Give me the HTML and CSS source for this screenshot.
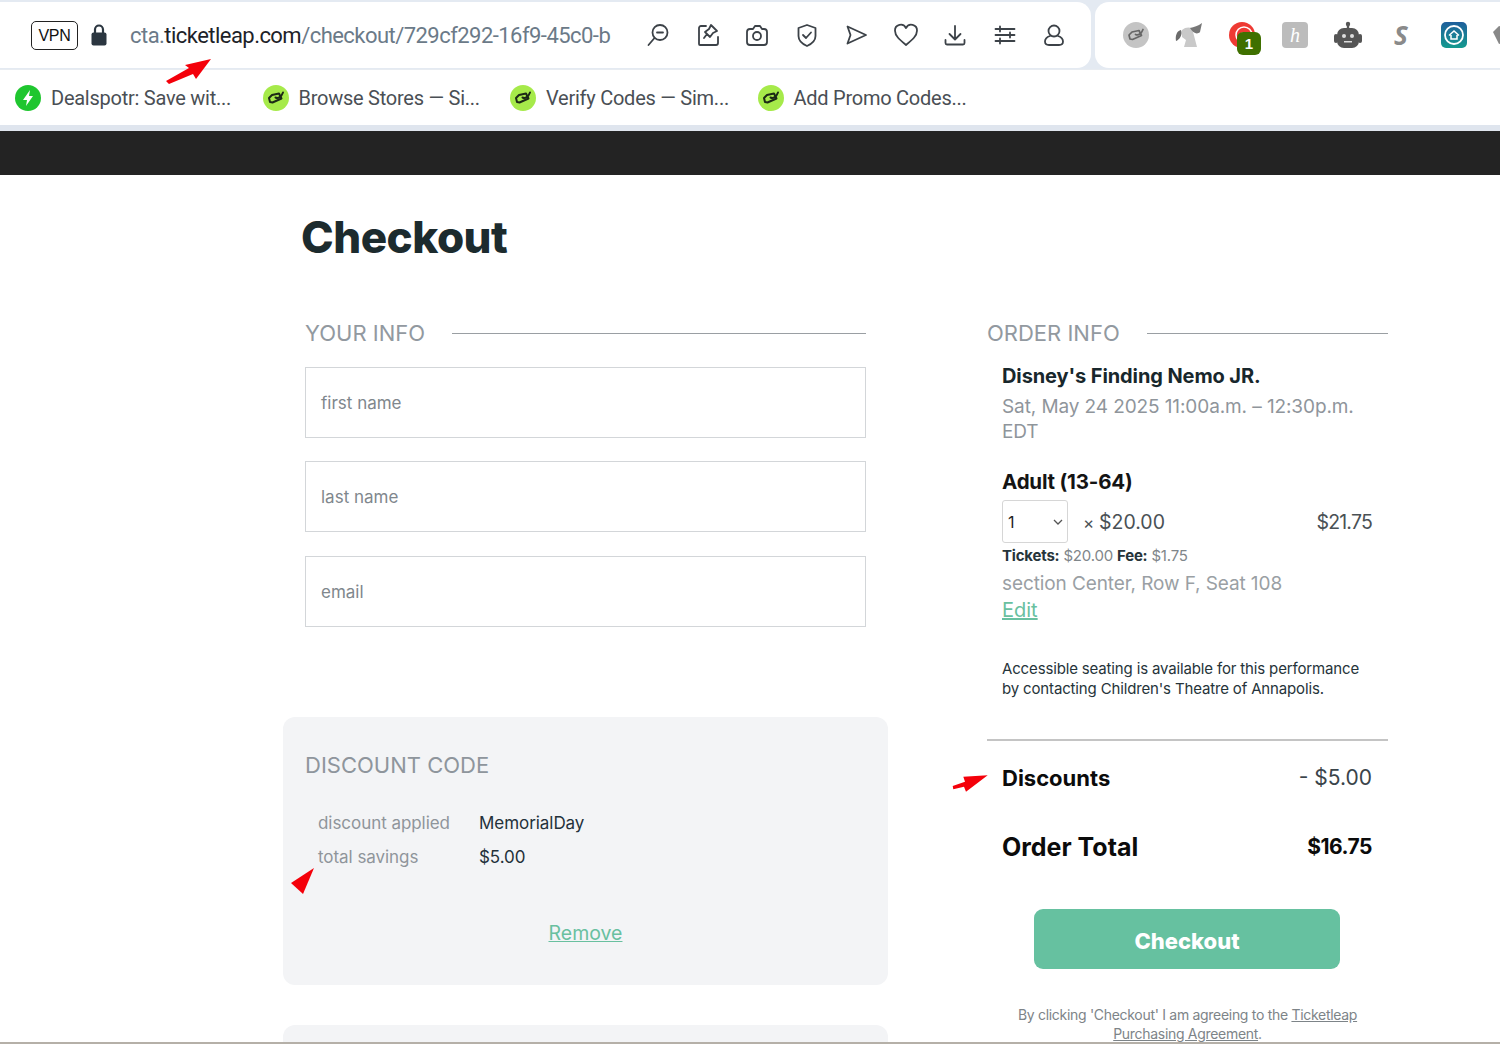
FILE: index.html
```html
<!DOCTYPE html>
<html lang="en">
<head>
<meta charset="utf-8">
<title>Checkout</title>
<link rel="stylesheet" href="styles.css">
</head>
<body>
<div class="window">
  <header class="toolbar">
    <div class="panel panel-main">
      <span class="vpn">VPN</span>
      <svg class="lock" viewBox="0 0 18 24" width="18" height="24"><path d="M5 10V6.500a4 4 0 0 1 8 0V10" fill="none" stroke="#2b3640" stroke-width="2.200"/><rect x="1.500" y="9.500" width="15" height="13" rx="2" fill="#2b3640"/></svg>
      <div class="url"><span>cta.</span><b>ticketleap.com</b><span>/checkout/729cf292-16f9-45c0-b</span></div>
      <div class="tools">
        <svg class="tool" viewBox="0 0 26 26"><circle cx="15" cy="10.500" r="7.500"/><path d="M12 10.500h6M9.500 16 3.500 23"/></svg>
        <svg class="tool" viewBox="0 0 26 26"><path d="M11 4H6a2 2 0 0 0-2 2v16a1 1 0 0 0 1 1h16a2 2 0 0 0 2-2v-6"/><path d="M16 3l6 6-4 2-3 4-5-5 4-3zM12 12l-3 4"/></svg>
        <svg class="tool" viewBox="0 0 26 26"><path d="M3 10a3 3 0 0 1 3-3h3l2-3h5l2 3h2a3 3 0 0 1 3 3v10a3 3 0 0 1-3 3H6a3 3 0 0 1-3-3z"/><circle cx="13" cy="14" r="4"/></svg>
        <svg class="tool" viewBox="0 0 26 26"><path d="M13 3l8.500 3v8c0 5-4 8-8.500 10-4.500-2-8.500-5-8.500-10V6z"/><path d="M9 13l3 3 5-5.500"/></svg>
        <svg class="tool" viewBox="0 0 26 26"><path d="M4.500 4.500 23 13 4.500 21.500 7.500 13z"/></svg>
        <svg class="tool" viewBox="0 0 26 26"><path d="M13 23C7 18 2 14 2 8.800A5.800 5.800 0 0 1 13 6a5.800 5.800 0 0 1 11 2.800C24 14 19 18 13 23z"/></svg>
        <svg class="tool" viewBox="0 0 26 26"><path d="M13 4v13M7.500 12l5.500 5.500 5.500-5.500M3.500 18v3a1.500 1.500 0 0 0 1.500 1.500h16a1.500 1.500 0 0 0 1.500-1.500v-3"/></svg>
        <svg class="tool" viewBox="0 0 26 26"><path d="M3.500 7h19M3.500 13h19M3.500 19h19M8 4.500v5M18 10.500v5M8 16.500v5"/></svg>
        <svg class="tool" viewBox="0 0 26 26"><circle cx="13" cy="9" r="5.500"/><path d="M9 14c-3 1-5 3-5 5.500C4 22 6 23 8 23h10c2 0 4-1 4-3.500 0-2.500-2-4.500-5-5.500"/></svg>
      </div>
    </div>
    <div class="panel panel-ext">
      <span class="ext"><svg viewBox="0 0 26 26" width="26" height="26"><circle cx="13" cy="13" r="13" fill="#c4c4c4"/><path d="M6 13l3-3 7-1.500 2.500 5-9 4-2.500-.5z" fill="none" stroke="#666" stroke-width="1.700" stroke-linejoin="round"/><path d="M12.500 12.500c3 1.500 6-1 7.500-5" fill="none" stroke="#666" stroke-width="1.700" stroke-linecap="round"/></svg></span>
      <span class="ext"><svg viewBox="0 0 28 26" width="28" height="26"><path d="M7 8c3-3 7-3 10-2l5 19H9l2-7-4-3z" fill="#c9c9c9"/><path d="M15 6c4-1 8-2 12-5l-2 9c-3 3-7 1-10-4z" fill="#777"/><path d="M6 8C2 9 0 13 1 19c3-1 7-6 5-11z" fill="#6b6b6b"/></svg></span>
      <span class="ext"><svg viewBox="0 0 26 26" width="26" height="26"><circle cx="13" cy="13" r="13" fill="#ee3a33"/><circle cx="15" cy="13" r="8" fill="none" stroke="#fff" stroke-width="1.500"/><circle cx="15" cy="14" r="4" fill="#fff"/></svg><span class="badge">1</span></span>
      <span class="ext"><span class="honey">h</span></span>
      <span class="ext"><svg viewBox="0 0 28 28" width="28" height="28"><circle cx="14" cy="3" r="2.200" fill="#555"/><rect x="12.800" y="4" width="2.400" height="4" fill="#555"/><rect x="3" y="7" width="22" height="20" rx="7" fill="#555"/><rect x="0" y="13" width="4" height="9" rx="2" fill="#555"/><rect x="24" y="13" width="4" height="9" rx="2" fill="#555"/><circle cx="10" cy="15" r="2" fill="#ddd"/><circle cx="18" cy="15" r="2" fill="#ddd"/><path d="M10 20h8v1.500h-8z" fill="#ddd"/></svg></span>
      <span class="ext ext-s">S</span>
      <span class="ext"><svg viewBox="0 0 26 26" width="26" height="26"><defs><linearGradient id="blueTeal" x1="0" y1="0" x2="0" y2="1"><stop offset="0" stop-color="#1f5f9c"/><stop offset="1" stop-color="#149a8f"/></linearGradient></defs><rect width="26" height="26" rx="5" fill="url(#blueTeal)"/><circle cx="13" cy="13" r="9" fill="none" stroke="#fff" stroke-width="1.800"/><path d="M8 13.500l5-4.500 5 4.500M10 13v4h6v-4" fill="none" stroke="#fff" stroke-width="1.500"/></svg></span>
      <span class="ext ext-cut"><svg viewBox="0 0 12 26" width="12" height="26"><path d="M0 10l6-6 6 2v14l-6 2z" fill="#888"/></svg></span>
    </div>
  </header>
  <nav class="bookmarks">
    <a class="mark"><svg viewBox="0 0 26 26" width="26" height="26"><circle cx="13" cy="13" r="13" fill="#1fc62f"/><path d="M15 5l-7 10h4l-1 6 7-10h-4z" fill="#fff"/></svg>Dealspotr: Save wit...</a>
    <a class="mark"><svg viewBox="0 0 26 26" width="26" height="26"><circle cx="13" cy="13" r="13" fill="#a6ea4a"/><path d="M6 13l3-3 7-1.500 2.500 5-9 4-2.500-.5z" fill="none" stroke="#1c2a16" stroke-width="2" stroke-linejoin="round"/><path d="M12.500 12.500c3 1.500 6-1 7.500-5" fill="none" stroke="#1c2a16" stroke-width="2" stroke-linecap="round"/></svg>Browse Stores — Si...</a>
    <a class="mark"><svg viewBox="0 0 26 26" width="26" height="26"><circle cx="13" cy="13" r="13" fill="#a6ea4a"/><path d="M6 13l3-3 7-1.500 2.500 5-9 4-2.500-.5z" fill="none" stroke="#1c2a16" stroke-width="2" stroke-linejoin="round"/><path d="M12.500 12.500c3 1.500 6-1 7.500-5" fill="none" stroke="#1c2a16" stroke-width="2" stroke-linecap="round"/></svg>Verify Codes — Sim...</a>
    <a class="mark"><svg viewBox="0 0 26 26" width="26" height="26"><circle cx="13" cy="13" r="13" fill="#a6ea4a"/><path d="M6 13l3-3 7-1.500 2.500 5-9 4-2.500-.5z" fill="none" stroke="#1c2a16" stroke-width="2" stroke-linejoin="round"/><path d="M12.500 12.500c3 1.500 6-1 7.500-5" fill="none" stroke="#1c2a16" stroke-width="2" stroke-linecap="round"/></svg>Add Promo Codes...</a>
  </nav>
  <div class="strip"></div>
  <div class="darkbar"></div>

  <main class="page">
    <h1 class="title">Checkout</h1>
    <div class="columns">
      <section class="left">
        <div class="info-block">
          <h2 class="heading"><span>YOUR INFO</span></h2>
          <div class="field">first name</div>
          <div class="field">last name</div>
          <div class="field">email</div>
        </div>
        <div class="card discount">
          <h2 class="heading-plain">DISCOUNT CODE</h2>
          <dl class="applied">
            <dt>discount applied</dt><dd>MemorialDay</dd>
            <dt>total savings</dt><dd>$5.00</dd>
          </dl>
          <a class="link remove">Remove</a>
        </div>
        <div class="card next"></div>
      </section>
      <section class="right">
        <h2 class="heading"><span>ORDER INFO</span></h2>
        <div class="order">
          <h3 class="event">Disney's Finding Nemo JR.</h3>
          <p class="when">Sat, May 24 2025 11:00a.m. – 12:30p.m. EDT</p>
          <h3 class="ticket">Adult (13-64)</h3>
          <div class="qty-row">
            <span class="select">1<svg viewBox="0 0 10 6" width="10" height="6"><path d="M1 1l4 4 4-4" fill="none" stroke="#555" stroke-width="1.300"/></svg></span>
            <span class="times">× <span class="each">$20.00</span></span>
            <span class="line-total">$21.75</span>
          </div>
          <p class="fees"><b>Tickets:</b> $20.00 <b>Fee:</b> $1.75</p>
          <p class="seat">section Center, Row F, Seat 108</p>
          <a class="link edit">Edit</a>
          <p class="access">Accessible seating is available for this performance by contacting Children's Theatre of Annapolis.</p>
        </div>
        <div class="totals">
          <div class="row-discount"><b>Discounts</b><span>- $5.00</span></div>
          <div class="row-total"><b>Order Total</b><b class="sum">$16.75</b></div>
        </div>
        <button class="pay">Checkout</button>
        <p class="legal">By clicking 'Checkout' I am agreeing to the <u>Ticketleap</u> <u>Purchasing Agreement</u>.</p>
      </section>
    </div>
  </main>

  <svg class="arrow arrow-url" viewBox="0 0 48 28" width="48" height="28"><path d="M1 24 24 11l-4-3 26-6-15 20-3-5L4 27z" fill="#f4000a"/></svg>
  <svg class="arrow arrow-disc" viewBox="0 0 36 20" width="36" height="20"><path d="M35.700 2.300 11.300 3.700 13 8.700.7 13l.6 3.300L12 13.700l2 5z" fill="#f4000a"/></svg>
  <svg class="arrow arrow-save" viewBox="0 0 24 26" width="24" height="26"><path d="M23 0 12 26 0 15z" fill="#f4000a"/></svg>
  <div class="bottom-edge"></div>
</div>
</body>
</html>
```
FILE: styles.css
```css
* { box-sizing: border-box; }
html, body { margin: 0; padding: 0; height: 100%; overflow: hidden; background: #fff; }
body { font-family: "Inter", "Liberation Sans", sans-serif; color: #1f2a2e; }
.window { position: relative; width: 1500px; height: 1044px; overflow: hidden; display: flex; flex-direction: column; }

.toolbar { height: 69px; padding-top: 2px; background: #e4eaf2; display: flex; gap: 4px; flex: none; }
.panel { background: #fff; height: 66px; display: flex; align-items: center; }
.panel-main { width: 1091px; flex: none; border-radius: 0 14px 14px 0; padding-left: 31px; }
.panel-ext { flex: 1; border-radius: 14px 0 0 14px; padding-left: 27px; }
.vpn { width: 47px; height: 29px; flex: none; padding-top: 2px; border: 1.500px solid #222; border-radius: 5px; font: 16px "Liberation Sans", sans-serif; letter-spacing: -0.3px; display: flex; align-items: center; justify-content: center; color: #111; }
.lock { margin-left: 12px; flex: none; }
.url { margin-left: 22px; width: 500px; flex: none; font: 22px "Roboto", sans-serif; letter-spacing: -0.54px; color: #6b7a88; white-space: nowrap; }
.url b { font-weight: 400; color: #1d2228; }
.tools { display: flex; gap: 23.500px; margin-left: 15px; flex: none; }
.tool { width: 26px; height: 26px; fill: none; stroke: #3c4248; stroke-width: 1.800; stroke-linecap: round; stroke-linejoin: round; }

.ext { width: 28px; height: 28px; margin-right: 25px; display: flex; align-items: center; justify-content: center; position: relative; flex: none; }
.ext-cut { margin-right: 0; justify-content: flex-start; }
.badge { position: absolute; left: 9px; top: 11px; width: 24px; height: 23px; border-radius: 6px; background: #3f7000; color: #fff; font: bold 15px "Liberation Sans", sans-serif; display: flex; align-items: center; justify-content: center; }
.honey { width: 26px; height: 26px; background: #bcbcbc; border-radius: 4px; color: #fff; font: italic 20px "Liberation Serif", serif; display: flex; align-items: center; justify-content: center; }
.ext-s { font: italic bold 26px "Open Sans", sans-serif; color: #8a8a8a; }

.bookmarks { height: 56px; flex: none; display: grid; grid-template-columns: repeat(4, 247.500px); align-items: center; padding-left: 15px; background: #fff; border-top: 1px solid #e8ecf1; }
.mark { display: flex; align-items: center; gap: 10px; font: 20px "Roboto", sans-serif; letter-spacing: -0.25px; color: #4a4f55; white-space: nowrap; }
.strip { height: 6px; background: #dfe5ee; flex: none; }
.darkbar { height: 44px; background: #232323; flex: none; }

.page { flex: 1; padding: 38px 0 0 283px; }
.title { margin: 0 0 0 18px; font: 800 44px/48px "Inter", sans-serif; letter-spacing: -0.5px; color: #1c2b2e; }
.columns { display: flex; margin-top: 62px; gap: 99px; }
.left { width: 605px; flex: none; }
.right { width: 401px; flex: none; }

.info-block { padding: 0 22px; }
.heading { margin: 0; height: 20px; font: 400 22px/20px "Inter", sans-serif; color: #9299a0; display: flex; align-items: center; gap: 27px; }
.heading::after { content: ""; flex: 1; height: 1px; background: #9a9fa3; }
.field { height: 71px; margin-top: 23.500px; border: 1px solid #d3d6d9; padding: 1px 15px 0; display: flex; align-items: center; font-size: 17px; color: #80878d; }

.card { background: #f3f4f6; border-radius: 12px; }
.discount { margin-top: 90px; height: 268px; padding: 37px 22px 0; display: flex; flex-direction: column; }
.heading-plain { margin: 0; font: 400 22px/22px "Inter", sans-serif; color: #8e959c; }
.applied { margin: 35px 0 0 13px; display: grid; grid-template-columns: 161px 1fr; row-gap: 10px; font-size: 17px; line-height: 24px; letter-spacing: -0.05px; }
.applied dt { color: #8f959b; }
.applied dd { margin: 0; color: #23313a; }
.link { color: #69c0a0; text-decoration: underline; }
.remove { align-self: center; font-size: 19.500px; margin-top: 52px; }
.next { margin-top: 40px; height: 60px; }

.order { padding: 0 16px 0 15px; }
.event { margin: 20px 0 0; font: 700 20px/26px "Inter", sans-serif; letter-spacing: -0.1px; color: #18272c; }
.when { margin: 5px 0 0; font-size: 19px; line-height: 25px; letter-spacing: -0.1px; color: #8f959b; }
.ticket { margin: 25px 0 0; font: 700 20.500px/26px "Inter", sans-serif; letter-spacing: -0.2px; color: #141414; }
.qty-row { margin-top: 5px; display: flex; align-items: center; font-size: 19.500px; color: #4a5155; }
.select { width: 66px; height: 43px; border: 1px solid #d6d6d6; border-radius: 3px; padding: 0 4px 0 5px; display: flex; align-items: center; justify-content: space-between; font-size: 16px; color: #222; }
.times { margin-left: 15px; font-size: 17px; }
.each { font-size: 19.500px; }
.line-total { margin-left: auto; letter-spacing: -0.8px; }
.fees { margin: 3px 0 0; font-size: 15px; line-height: 20px; letter-spacing: -0.2px; color: #7f868a; }
.fees b { color: #26343a; }
.seat { margin: 5px 0 0; font-size: 19px; line-height: 25px; letter-spacing: -0.1px; color: #9a9fa4; }
.edit { display: block; font-size: 20px; line-height: 28px; }
.access { margin: 35px 0 0; font-size: 15px; line-height: 20px; letter-spacing: -0.15px; color: #26343a; }

.totals { margin-top: 40px; border-top: 2px solid #c4c4c4; padding: 24px 16px 0 15px; }
.row-discount { display: flex; justify-content: space-between; align-items: center; font-size: 22px; line-height: 26px; }
.row-discount b { color: #0b0b0b; }
.row-discount span { color: #3a444a; font-size: 21px; }
.row-total { display: flex; justify-content: space-between; align-items: center; margin-top: 41px; font-size: 25px; line-height: 30px; color: #0b0b0b; }
.sum { font-size: 21px; letter-spacing: -0.5px; }
.pay { display: block; width: 306px; height: 60px; margin: 47px 0 0 47px; padding-top: 5px; background: #66c1a0; border: 0; border-radius: 9px; color: #fff; font: 800 22px "Inter", sans-serif; }
.legal { margin: 36px 0 0; padding: 0 20px; text-align: center; font-size: 14px; line-height: 19px; letter-spacing: -0.3px; color: #7d8488; }

.arrow { position: absolute; }
.arrow-url { left: 165px; top: 57px; }
.arrow-disc { left: 952px; top: 773px; }
.arrow-save { left: 291px; top: 868px; }
.bottom-edge { position: absolute; left: 0; right: 0; bottom: 0; height: 2px; background: #b5b0a8; }
```
